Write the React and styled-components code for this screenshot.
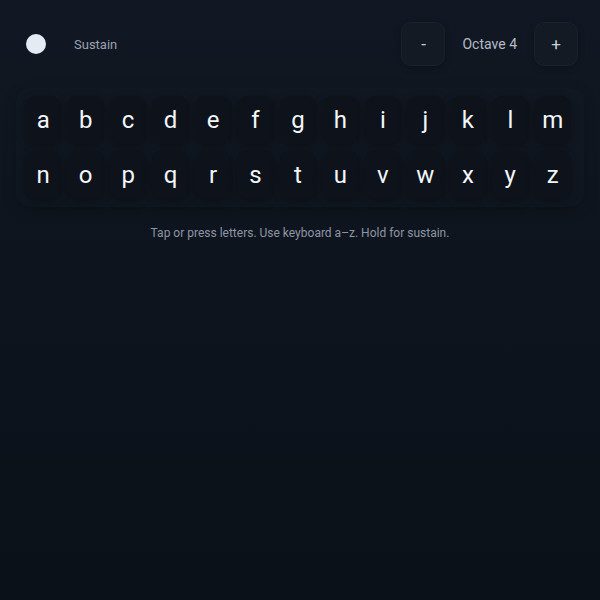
import styled, { createGlobalStyle } from "styled-components";

const GlobalStyle = createGlobalStyle`
  html, body {
    margin: 0;
    padding: 0;
    background: #0b1018;
  }
  body {
    font-family: Roboto, "Liberation Sans", sans-serif;
  }
`;

const Page = styled.div`
  width: 600px;
  height: 600px;
  box-sizing: border-box;
  background: linear-gradient(180deg, #121823 0%, #0e141d 45%, #0b1119 100%);
  display: flex;
  flex-direction: column;
`;

const Header = styled.div`
  display: flex;
  justify-content: space-between;
  align-items: center;
  padding: 22px 22px 0 22px;
  height: 44px;
`;

const SustainGroup = styled.div`
  display: flex;
  align-items: center;
  gap: 28px;
  padding-left: 4px;
`;

const SustainDot = styled.div`
  width: 20px;
  height: 20px;
  border-radius: 50%;
  background: #e6eaf3;
`;

const Label = styled.span`
  font-size: 13px;
  color: #9aa2b0;
`;

const OctaveGroup = styled.div`
  display: flex;
  align-items: center;
  gap: 17px;
`;

const OctaveButton = styled.button`
  width: 44px;
  height: 44px;
  border-radius: 10px;
  border: 1px solid #1a212d;
  background: #141a24;
  color: #c9ced8;
  font-family: Roboto, "Liberation Sans", sans-serif;
  font-size: 17px;
  display: flex;
  align-items: center;
  justify-content: center;
  box-shadow: 0 2px 6px rgba(0, 0, 0, 0.3);
  padding: 0;
`;

const OctaveLabel = styled.span`
  font-size: 14px;
  color: #b4bbc7;
`;

const Panel = styled.div`
  margin: 22px 16px 0 16px;
  padding: 8px 13px 8px 9px;
  border-radius: 14px;
  background: rgba(255, 255, 255, 0.006);
  box-shadow: 0 4px 14px rgba(0, 0, 0, 0.2);
  display: grid;
  grid-template-columns: repeat(13, 1fr);
  column-gap: 6px;
  row-gap: 7px;
`;

const Key = styled.div`
  height: 48px;
  border-radius: 10px;
  background: #0d121b;
  box-shadow: 0 2px 8px rgba(0, 0, 0, 0.3);
  color: #f4f6fa;
  font-size: 24px;
  display: flex;
  align-items: center;
  justify-content: center;
`;

const Hint = styled.p`
  margin: 19px 0 0 0;
  text-align: center;
  font-size: 12px;
  color: #8d96a5;
`;

const letters = "abcdefghijklmnopqrstuvwxyz".split("");

export default function App() {
  return (
    <>
      <GlobalStyle />
      <Page>
        <Header>
          <SustainGroup>
            <SustainDot />
            <Label>Sustain</Label>
          </SustainGroup>
          <OctaveGroup>
            <OctaveButton>-</OctaveButton>
            <OctaveLabel>Octave 4</OctaveLabel>
            <OctaveButton>+</OctaveButton>
          </OctaveGroup>
        </Header>
        <Panel>
          {letters.map((l) => (
            <Key key={l}>{l}</Key>
          ))}
        </Panel>
        <Hint>Tap or press letters. Use keyboard a–z. Hold for sustain.</Hint>
      </Page>
    </>
  );
}
